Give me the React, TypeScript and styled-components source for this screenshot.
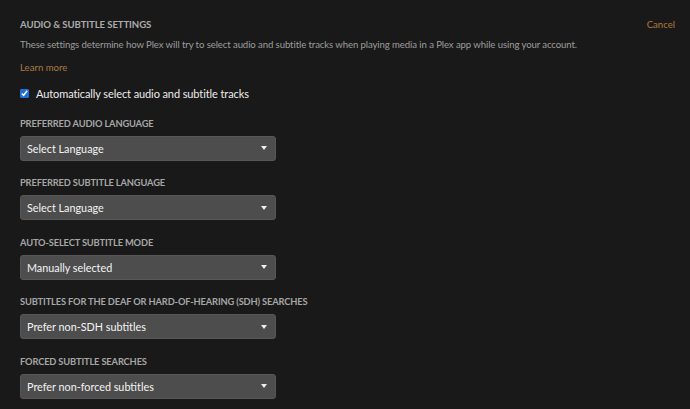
import React from "react";
import styled, { createGlobalStyle } from "styled-components";

const Global = createGlobalStyle`
  html, body { margin: 0; padding: 0; background: #191919; }
  body { font-family: Lato, "Open Sans", sans-serif; }
  * { box-sizing: border-box; }
`;

const Page = styled.div`
  width: 690px;
  height: 409px;
  background: #191919;
  padding: 16px 15px 0 20px;
  display: flex;
  flex-direction: column;
  overflow: hidden;
`;

const Header = styled.div`
  display: flex;
  justify-content: space-between;
  align-items: center;
  height: 16px;
`;

const Title = styled.h1`
  margin: 0;
  font-size: 9.6px;
  font-weight: 700;
  letter-spacing: -0.1px;
  color: #ababab;
`;

const Cancel = styled.a`
  font-size: 9.6px;
  color: #b3783a;
  cursor: pointer;
`;

const Desc = styled.p`
  margin: 6px 0 0;
  font-size: 9.6px;
  letter-spacing: -0.1px;
  color: #9d9d9d;
  line-height: 14px;
`;

const Learn = styled.a`
  margin-top: 9px;
  font-size: 9.6px;
  color: #a87a45;
  line-height: 14px;
`;

const CheckRow = styled.label`
  display: flex;
  align-items: center;
  gap: 7px;
  margin-top: 10px;
  font-size: 11px;
  letter-spacing: -0.1px;
  color: #ececec;
  height: 16px;
`;

const Check = styled.input`
  width: 9px;
  height: 9px;
  margin: 0;
  accent-color: #1f6fd8;
`;

const Group = styled.div`
  display: flex;
  flex-direction: column;
  gap: 6px;
  margin-top: 15.5px;
`;

const Label = styled.div`
  font-size: 9.3px;
  font-weight: 700;
  letter-spacing: -0.15px;
  color: #a6a6a6;
  line-height: 13px;
`;

const Select = styled.div`
  width: 256px;
  height: 25px;
  background: #4d4d4d;
  border: 1px solid #575757;
  border-radius: 3px;
  display: flex;
  align-items: center;
  justify-content: space-between;
  padding: 0 8px 0 6px;
  font-size: 10.8px;
  color: #f4f4f4;
`;

const Caret = styled.span`
  width: 0;
  height: 0;
  border-left: 3px solid transparent;
  border-right: 3px solid transparent;
  border-top: 4px solid #eee;
`;

const fields = [
  ["PREFERRED AUDIO LANGUAGE", "Select Language"],
  ["PREFERRED SUBTITLE LANGUAGE", "Select Language"],
  ["AUTO-SELECT SUBTITLE MODE", "Manually selected"],
  ["SUBTITLES FOR THE DEAF OR HARD-OF-HEARING (SDH) SEARCHES", "Prefer non-SDH subtitles"],
  ["FORCED SUBTITLE SEARCHES", "Prefer non-forced subtitles"],
];

export default function App() {
  return (
    <>
      <Global />
      <Page>
        <Header>
          <Title>AUDIO &amp; SUBTITLE SETTINGS</Title>
          <Cancel>Cancel</Cancel>
        </Header>
        <Desc>
          These settings determine how Plex will try to select audio and subtitle tracks when playing media in a Plex app while using your account.
        </Desc>
        <Learn>Learn more</Learn>
        <CheckRow>
          <Check type="checkbox" defaultChecked />
          Automatically select audio and subtitle tracks
        </CheckRow>
        {fields.map(([l, v], i) => (
          <Group key={i}>
            <Label>{l}</Label>
            <Select>
              {v}
              <Caret />
            </Select>
          </Group>
        ))}
      </Page>
    </>
  );
}
